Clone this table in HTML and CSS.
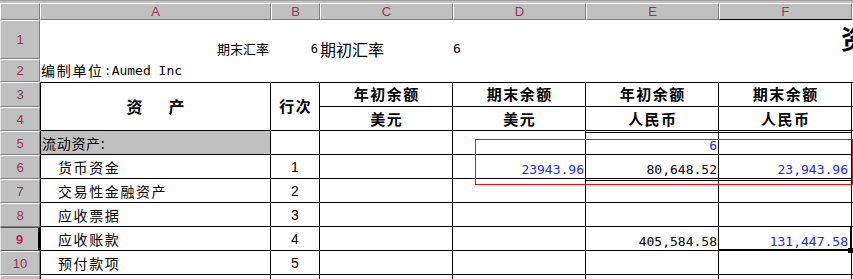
FILE: index.html
```html
<!DOCTYPE html>
<html lang="zh-CN">
<head>
<meta charset="utf-8">
<title>资产负债表</title>
<link rel="stylesheet" href="styles.css">
</head>
<body>
<div class="sheet">
  <div class="strip"></div>

  <div class="ch corner"></div>
  <div class="ch">A</div>
  <div class="ch">B</div>
  <div class="ch">C</div>
  <div class="ch">D</div>
  <div class="ch">E</div>
  <div class="ch ch-sel">F</div>
  <div class="ch"></div>

  <!-- row 1 -->
  <div class="rh">1</div>
  <div class="c r1-a">期末汇率</div>
  <div class="c r1-b">6</div>
  <div class="c r1-c">期初汇率</div>
  <div class="c r1-d">6</div>
  <div class="c"></div>
  <div class="c r1-f"><span class="title">资产负债表</span></div>
  <div class="c"></div>

  <!-- row 2 -->
  <div class="rh">2</div>
  <div class="c r2-a"><span class="cjk">编制单位</span><span class="mono">:Aumed Inc</span></div>
  <div class="c"></div>
  <div class="c"></div>
  <div class="c"></div>
  <div class="c"></div>
  <div class="c"></div>
  <div class="c"></div>

  <!-- row 3 -->
  <div class="rh">3</div>
  <div class="c t a top h span2 asset"><span>资</span><span>产</span></div>
  <div class="c t top h span2">行次</div>
  <div class="c t top h">年初余额</div>
  <div class="c t top h">期末余额</div>
  <div class="c t top h">年初余额</div>
  <div class="c t top h">期末余额</div>
  <div class="c g top"></div>

  <!-- row 4 -->
  <div class="rh">4</div>
  <div class="c t h h2">美元</div>
  <div class="c t h h2">美元</div>
  <div class="c t h h2">人民币</div>
  <div class="c t h h2">人民币</div>
  <div class="c g"></div>

  <!-- row 5 -->
  <div class="rh">5</div>
  <div class="c t a lbl grp">流动资产:</div>
  <div class="c t"></div>
  <div class="c t"></div>
  <div class="c t"></div>
  <div class="c t n blue extra">6</div>
  <div class="c t extra"></div>
  <div class="c g"></div>

  <!-- row 6 -->
  <div class="rh">6</div>
  <div class="c t a lbl">货币资金</div>
  <div class="c t no">1</div>
  <div class="c t"></div>
  <div class="c t n blue">23943.96</div>
  <div class="c t n">80,648.52</div>
  <div class="c t n blue nf">23,943.96</div>
  <div class="c g"></div>

  <!-- row 7 -->
  <div class="rh">7</div>
  <div class="c t a lbl">交易性金融资产</div>
  <div class="c t no">2</div>
  <div class="c t"></div>
  <div class="c t"></div>
  <div class="c t extra"></div>
  <div class="c t extra"></div>
  <div class="c g"></div>

  <!-- row 8 -->
  <div class="rh">8</div>
  <div class="c t a lbl">应收票据</div>
  <div class="c t no">3</div>
  <div class="c t"></div>
  <div class="c t"></div>
  <div class="c t"></div>
  <div class="c t"></div>
  <div class="c g"></div>

  <!-- row 9 -->
  <div class="rh rh-sel">9</div>
  <div class="c t a lbl">应收账款</div>
  <div class="c t no">4</div>
  <div class="c t"></div>
  <div class="c t"></div>
  <div class="c t n">405,584.58</div>
  <div class="c t n blue nf sel">131,447.58</div>
  <div class="c g"></div>

  <!-- row 10 -->
  <div class="rh">10</div>
  <div class="c t a lbl">预付款项</div>
  <div class="c t no">5</div>
  <div class="c t"></div>
  <div class="c t"></div>
  <div class="c t"></div>
  <div class="c t"></div>
  <div class="c g"></div>

  <!-- row 11 -->
  <div class="rh">11</div>
  <div class="c t a"></div>
  <div class="c t"></div>
  <div class="c t"></div>
  <div class="c t"></div>
  <div class="c t"></div>
  <div class="c t"></div>
  <div class="c g"></div>

  <div class="redbox"></div>
</div>
</body>
</html>
```

FILE: styles.css
```css
html, body {
  margin: 0;
  padding: 0;
  background: #ffffff;
  overflow: hidden;
}

.sheet {
  position: relative;
  display: grid;
  grid-template-columns: 40px 231px 49px 133px 133px 133px 133px 1fr;
  grid-template-rows: 3px 17px 39px 23px 25px repeat(8, 24px);
  width: 853px;
  height: 279px;
  overflow: hidden;
  font-family: "Noto Sans CJK SC", sans-serif;
  color: #000;
}

.sheet > div {
  box-sizing: border-box;
  min-width: 0;
}

.strip {
  grid-column: 1 / -1;
  background: #c4c4c4;
  border-top: 1px solid #a0a0a0;
}

.ch {
  background: #c0c0c0;
  border-top: 1px solid #ffffff;
  border-left: 1px solid #ffffff;
  border-right: 1px solid #808080;
  border-bottom: 1px solid #808080;
  display: flex;
  align-items: center;
  justify-content: center;
  font-family: "Liberation Sans", sans-serif;
  font-size: 13px;
  line-height: 1;
  color: #9a3358;
}

.ch.corner {
  border-left: 1px solid #ffffff;
}

.ch-sel {
  color: #d42a2a;
  border-bottom: 1px solid #000;
}

.rh {
  background: #c0c0c0;
  border-top: 1px solid #ffffff;
  border-left: 1px solid #e8e8e8;
  border-right: 1px solid #808080;
  border-bottom: 1px solid #808080;
  display: flex;
  align-items: center;
  justify-content: center;
  font-family: "Liberation Sans", sans-serif;
  font-size: 13px;
  line-height: 1;
  color: #9a3358;
}

.rh-sel {
  font-weight: 700;
  color: #b8283e;
  border-right: 2px solid #000;
  border-top: 1px solid #505050;
  border-bottom: 1px solid #505050;
}

.c {
  display: flex;
  align-items: center;
  white-space: nowrap;
  line-height: 1;
  font-size: 14px;
}

/* table cells */
.t {
  border-right: 1px solid #000;
  border-bottom: 1px solid #000;
}

.t.a {
  border-left: 1px solid #000;
}

.top {
  border-top: 1px solid #000;
}

.g {
  border-bottom: 1px solid #000;
}

.span2 {
  grid-row: span 2;
}

/* header labels */
.h {
  justify-content: center;
  font-weight: 700;
  font-size: 15px;
  letter-spacing: 1.5px;
  padding-left: 1.5px;
  padding-bottom: 2px;
}

.h.h2 {
  padding-bottom: 0;
}

.asset {
  gap: 26px;
  font-size: 16px;
  letter-spacing: 0;
  padding-left: 0;
}

/* row 1 */
.r1-a {
  justify-content: flex-end;
  align-items: flex-end;
  font-size: 13px;
  padding-right: 2px;
  padding-bottom: 4px;
}

.r1-b {
  justify-content: flex-end;
  align-items: flex-end;
  font-family: "DejaVu Sans Mono", monospace;
  font-size: 12px;
  padding-right: 2px;
  padding-bottom: 4px;
}

.r1-c {
  align-items: flex-end;
  font-size: 16px;
  padding-bottom: 2px;
}

.r1-d {
  align-items: flex-end;
  font-family: "DejaVu Sans Mono", monospace;
  font-size: 13px;
  padding-bottom: 4px;
}

.r1-f {
  align-items: flex-start;
  padding-left: 122px;
  padding-top: 5px;
  overflow: visible;
}

.title {
  font-size: 26px;
  font-weight: 700;
}

/* row 2 */
.r2-a {
  align-items: flex-end;
  padding-left: 1px;
  padding-bottom: 5px;
  overflow: visible;
}

.cjk {
  font-size: 14px;
  letter-spacing: 1.7px;
}

.mono {
  font-family: "DejaVu Sans Mono", monospace;
  font-size: 13px;
}

/* body labels */
.lbl {
  padding-left: 17px;
  letter-spacing: 1.6px;
}

.grp {
  background: #c0c0c0;
  padding-left: 1px;
  letter-spacing: 0.7px;
}

.no {
  justify-content: center;
  font-family: "Liberation Sans", sans-serif;
  font-size: 14px;
}

.n {
  justify-content: flex-end;
  align-items: flex-end;
  font-family: "DejaVu Sans Mono", monospace;
  font-size: 13px;
  padding-right: 1px;
  padding-bottom: 2px;
}

.nf {
  padding-right: 3px;
}

.blue {
  color: #2626f2;
}

.extra {
  background-image: linear-gradient(to bottom, transparent 1px, #000 1px, #000 2px, transparent 2px);
}

/* selected cell */
.sel {
  position: relative;
}

.sel::after {
  content: "";
  position: absolute;
  left: -1px;
  top: -1px;
  right: -1px;
  bottom: -1px;
  border-right: 2px solid #000;
  border-bottom: 2px solid #000;
}

.sel::before {
  content: "";
  position: absolute;
  right: -2px;
  bottom: -3px;
  width: 5px;
  height: 5px;
  background: #000;
  z-index: 1;
}

.redbox {
  position: absolute;
  left: 475px;
  top: 139px;
  width: 378px;
  height: 46px;
  box-sizing: border-box;
  border: 1px solid #e81414;
  pointer-events: none;
}
```
